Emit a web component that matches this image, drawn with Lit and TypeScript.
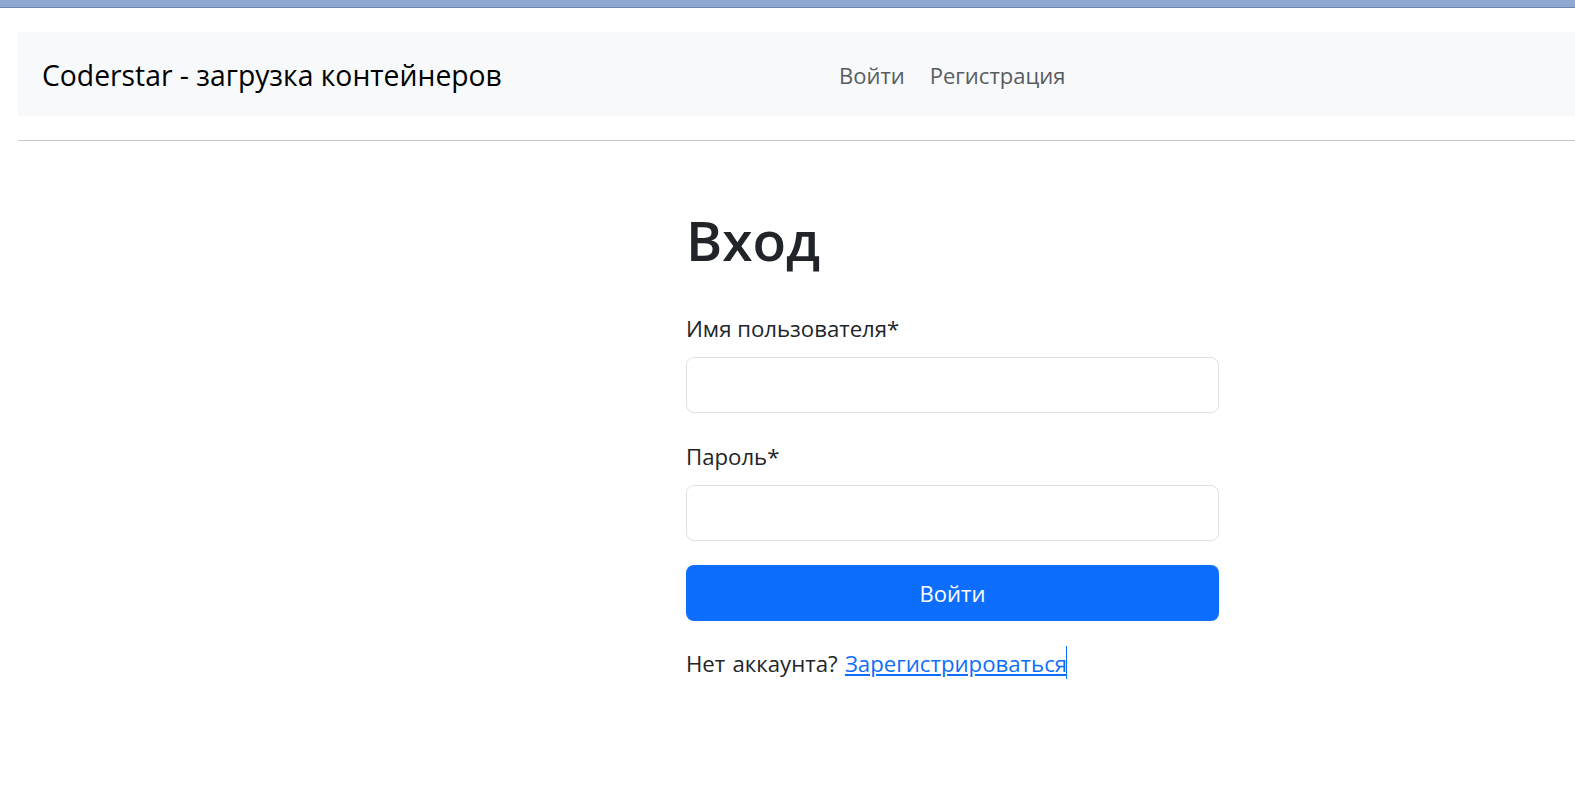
import { LitElement, html, css } from "lit";
import { customElement } from "lit/decorators.js";

@customElement("app-root")
export class AppRoot extends LitElement {
  static styles = css`
    :host { display: block; font-family: "Open Sans", "Noto Sans", sans-serif; color: #212529; background: #fff; min-height: 795px; overflow: hidden; }
    .top { box-sizing: border-box; height: 8px; background: #8fa8d2; border-bottom: 1px solid #6f86ad; }
    .wrap { padding: 24px 0 0 18px; }
    .nav { box-sizing: border-box; height: 84px; background: #f8f9fa; display: flex; align-items: center; padding: 2px 24px 0; }
    .brand { font-size: 28.3px; line-height: 38px; color: #000; width: 797px; flex: none; white-space: nowrap; }
    .links { display: flex; gap: 25px; font-size: 22px; color: #595c5f; }
    .links a { color: inherit; text-decoration: none; }
    hr { margin: 24px 0 0; border: 0; border-top: 1px solid #c8c9ca; }
    .form { width: 533px; margin: 0 0 0 668px; display: flex; flex-direction: column; }
    h1 { font-size: 55px; font-weight: 600; margin: 66px 0 0; line-height: 66px; }
    label { font-size: 22.2px; display: block; line-height: 33px; margin-bottom: 12px; }
    .first { margin-top: 39px; }
    .next { margin-top: 27px; }
    input { display: block; width: 100%; height: 56px; border: 1px solid #dee2e6; border-radius: 8px; box-sizing: border-box; background: #fff; }
    .btn { height: 56px; background: #0d6efd; color: #fff; border: 0; border-radius: 8px; font: inherit; font-size: 22px; margin-top: 24px; }
    p { margin: 25px 0 0; font-size: 22.2px; line-height: 33px; word-spacing: 1.5px; }
    .link { color: #0d6efd; }
    .caret { display: inline-block; width: 1px; height: 33px; background: #0d6efd; vertical-align: -7px; margin-left: -1px; }
  `;
  render() {
    return html`<div class="top"></div>
      <div class="wrap">
        <nav class="nav">
          <div class="brand">Coderstar - загрузка контейнеров</div>
          <div class="links"><a href="#">Войти</a><a href="#">Регистрация</a></div>
        </nav>
        <hr />
        <form class="form">
          <h1>Вход</h1>
          <label class="first">Имя пользователя*</label>
          <input type="text" />
          <label class="next">Пароль*</label>
          <input type="password" />
          <button class="btn" type="button">Войти</button>
          <p>Нет аккаунта? <a class="link" href="#">Зарегистрироваться</a><span class="caret"></span></p>
        </form>
      </div>`;
  }
}
